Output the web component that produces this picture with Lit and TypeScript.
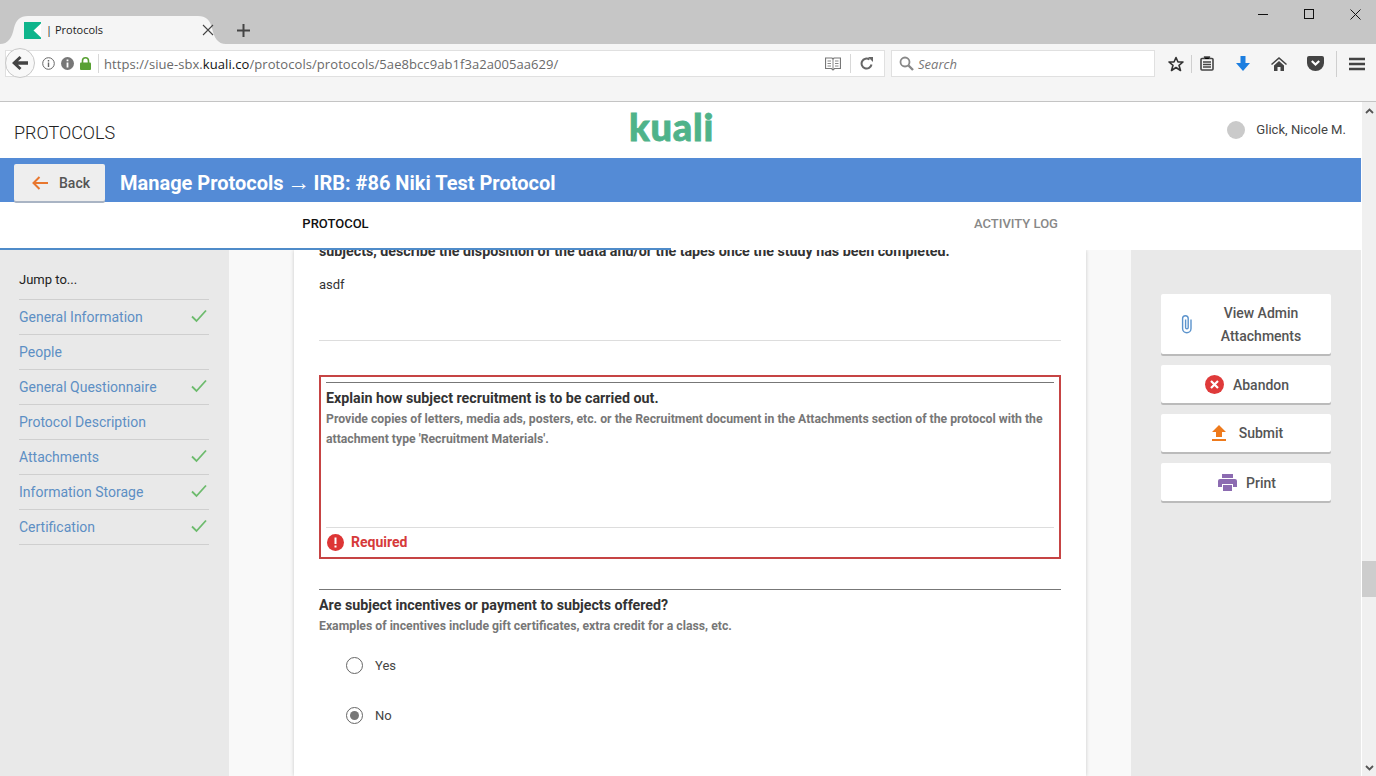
import { LitElement, html, css } from "lit";
import { customElement } from "lit/decorators.js";

const check = html`<svg class="check" width="16" height="14" viewBox="0 0 16 14"><path d="M1 7.5 5.5 12 15 1.5" fill="none" stroke="#6dbb6d" stroke-width="1.8"/></svg>`;

const NAV: [string, boolean][] = [
  ["General Information", true],
  ["People", false],
  ["General Questionnaire", true],
  ["Protocol Description", false],
  ["Attachments", true],
  ["Information Storage", true],
  ["Certification", true],
];

@customElement("browser-chrome")
class BrowserChrome extends LitElement {
  static styles = css`
    :host { display: block; font-family: "Open Sans", sans-serif; }
    .titlebar { height: 44px; background: #c6c6c6; display: flex; }
    .tab { position: relative; width: 226px; height: 28px; margin-top: 16px; display: flex; align-items: center; padding-left: 24px; box-sizing: border-box; }
    .tabshape { position: absolute; left: 0; top: 0; }
    .tab > *:not(.tabshape) { position: relative; }
    .tabtitle { margin-left: 5px; font-size: 11px; color: #222; width: 156px; padding-bottom: 2px; }
    .plus { margin: 16px 0 0 11px; height: 28px; display: flex; align-items: center; }
    .winctl { margin-left: auto; display: flex; height: 28px; align-items: center; padding-right: 15px; gap: 36px; }
    .toolbar { background: #f5f5f5; border-bottom: 1px solid #c4c4c4; position: relative; display: flex; align-items: flex-start; padding: 6px 0 0 5px; box-sizing: border-box; height: 58px; }
    .backbtn { position: absolute; left: 5px; top: 4px; width: 30px; height: 30px; border-radius: 50%; background: #f8f8f8; border: 1px solid #c8c8c8; display: flex; align-items: center; justify-content: center; box-sizing: border-box; }
    .urlbar { width: 880px; height: 27px; background: #fff; border: 1px solid #e0e0e0; box-sizing: border-box; display: flex; align-items: center; padding-left: 36px; gap: 6px; }
    .sep { width: 1px; height: 19px; background: #d8d8d8; }
    .lock { margin-right: 1px; }
    .url { font-size: 13px; color: #6a6a6a; flex: 1; letter-spacing: 0.07px; margin-left: -1px; }
    .url b { font-weight: 400; color: #111; }
    .urlend { display: flex; align-items: center; gap: 9px; padding-right: 11px; }
    .search { width: 264px; height: 27px; margin-left: 6px; background: #fff; border: 1px solid #e0e0e0; box-sizing: border-box; display: flex; align-items: center; padding-left: 7px; gap: 4px; font-style: italic; font-size: 13px; color: #777; }
    .tools { display: flex; align-items: center; height: 27px; margin-left: 13px; }
    .tools svg { flex: none; display: block; }
    .tsep { width: 1px; height: 18px; background: #cfcfcf; margin: 0 8px 0 7px; }
    .g22 { width: 22px; }
    .g21 { width: 21px; }
    .g20 { width: 20px; }
    .tsep.tall { height: 26px; margin: 0 12px; }
  `;
  render() {
    return html`
      <div class="titlebar">
        <div class="tab">
          <svg class="tabshape" width="226" height="28" viewBox="0 0 226 28"><path d="M0 28C8 28 12 22 14 12 16 4 20 0 28 0H198C206 0 210 4 212 12 214 22 218 28 226 28Z" fill="#f5f5f5"/></svg>
          <svg width="17" height="17" viewBox="0 0 17 17"><rect width="17" height="17" fill="#0fb58c"/><path d="M17 1.500 9.500 8.500 17 15.500Z" fill="#fff"/></svg>
          <span class="tabtitle">| Protocols</span>
          <svg width="12" height="12" viewBox="0 0 12 12"><path d="M1 1 11 11M11 1 1 11" stroke="#444" stroke-width="1.1"/></svg>
        </div>
        <div class="plus"><svg width="13" height="13" viewBox="0 0 13 13"><path d="M6.5 0V13M0 6.5H13" stroke="#444" stroke-width="2"/></svg></div>
        <div class="winctl">
          <svg width="10" height="10" viewBox="0 0 10 10"><path d="M0 5.5H10" stroke="#111"/></svg>
          <svg width="10" height="10" viewBox="0 0 10 10"><rect x=".5" y=".5" width="9" height="9" fill="none" stroke="#111"/></svg>
          <svg width="11" height="11" viewBox="0 0 11 11"><path d="M.5.5 10.5 10.5M10.5.5 .5 10.5" stroke="#111"/></svg>
        </div>
      </div>
      <div class="toolbar">
        <div class="backbtn"><svg width="16" height="14" viewBox="0 0 16 14"><path d="M7.5 0 0 7 7.5 14 9.5 12 6 8.7H16V5.3H6L9.5 2Z" fill="#444"/></svg></div>
        <div class="urlbar">
          <svg width="13" height="13" viewBox="0 0 13 13"><circle cx="6.5" cy="6.5" r="5.8" fill="none" stroke="#666"/><path d="M6.5 3V4.4M6.5 5.6V10" stroke="#666" stroke-width="1.4"/></svg>
          <svg width="13" height="13" viewBox="0 0 13 13"><circle cx="6.5" cy="6.5" r="6.5" fill="#777"/><path d="M6.5 2.5V4.2M6.5 5.4V10.5" stroke="#fff" stroke-width="1.8"/></svg>
          <svg class="lock" width="11" height="13" viewBox="0 0 11 13"><path d="M2.5 6V3.8a3 3 0 0 1 6 0V6" fill="none" stroke="#57a032" stroke-width="1.6"/><rect y="5.5" width="11" height="7.5" rx="1" fill="#57a032"/></svg>
          <span class="sep"></span>
          <span class="url">https://siue-sbx.<b>kuali.co</b>/protocols/protocols/5ae8bcc9ab1f3a2a005aa629/</span>
          <span class="urlend">
            <svg width="16" height="14" viewBox="0 0 16 14"><path d="M.5 1H7L8 2 9 1H15.5V11.5H9.5L8 13 6.500 11.500H.5Z" fill="none" stroke="#777" stroke-width="1.2"/><path d="M8 2V12M2.500 4H6M2.500 6.500H6M2.500 9H6M10 4H13.500M10 6.500H13.500M10 9H13.500" stroke="#888"/></svg>
            <span class="sep"></span>
            <svg width="13" height="13" viewBox="0 0 13 13"><path d="M11.500 7.500A5 5 0 1 1 9.500 2.500" fill="none" stroke="#666" stroke-width="2"/><path d="M8 0H13V5Z" fill="#666"/></svg>
          </span>
        </div>
        <div class="search">
          <svg width="15" height="15" viewBox="0 0 15 15"><circle cx="6" cy="6" r="4.500" fill="none" stroke="#888" stroke-width="1.800"/><path d="M9.500 9.500 14 14" stroke="#888" stroke-width="2.400"/></svg>
          <span>Search</span>
        </div>
        <div class="tools">
          <svg width="16" height="16" viewBox="0 0 16 16"><path d="M8 1.500 10 6H15L11 9.300 12.500 14.500 8 11.500 3.500 14.500 5 9.300 1 6H6Z" fill="none" stroke="#333" stroke-width="1.600" stroke-linejoin="round"/></svg>
          <span class="tsep"></span>
          <svg width="14" height="15" viewBox="0 0 14 15"><rect x="1" y="2.500" width="12" height="11.500" rx="1" fill="none" stroke="#444" stroke-width="1.600"/><path d="M4.500 3V1H9.500V3M3 6H11M3 8.500H11M3 11H11" stroke="#444" stroke-width="1.300"/></svg>
          <span class="g22"></span>
          <svg width="14" height="15" viewBox="0 0 14 15"><path d="M4.500 0H9.500V7H14L7 15 0 7H4.500Z" fill="#1c7ee0"/></svg>
          <span class="g21"></span>
          <svg width="16" height="14" viewBox="0 0 16 14"><path d="M8 0 16 7 15 8 8 2 1 8 0 7ZM3 8.500 8 4 13 8.500V14H9.500V10H6.500V14H3Z" fill="#444"/></svg>
          <span class="g20"></span>
          <svg width="17" height="15" viewBox="0 0 17 15"><path d="M2 0H15A2 2 0 0 1 17 2V7A8.500 8 0 0 1 0 7V2A2 2 0 0 1 2 0Z" fill="#444"/><path d="M4.800 5 8.500 8.500 12.200 5" fill="none" stroke="#fff" stroke-width="2.200"/></svg>
          <span class="tsep tall"></span>
          <svg width="16" height="14" viewBox="0 0 16 14"><path d="M0 2H16M0 7H16M0 12H16" stroke="#444" stroke-width="2.600"/></svg>
        </div>
      </div>
    `;
  }
}

@customElement("app-root")
class AppRoot extends LitElement {
  static styles = css`
    :host { display: block; width: 1376px; height: 776px; overflow: hidden; font-family: Roboto, sans-serif; background: #fff; }
    .page { display: flex; height: 674px; }
    .content { width: 1361px; display: flex; flex-direction: column; }
    .scrollbar { width: 14px; margin-left: 1px; background: #f0f0f0; display: flex; flex-direction: column; align-items: center; padding-top: 6px; box-sizing: border-box; }
    .thumb { align-self: stretch; height: 36px; margin-top: 447px; background: #cdcdcd; }
    .sdown { margin-top: auto; margin-bottom: 5px; }
    .head { height: 56px; display: flex; align-items: center; padding: 0 15px 0 14px; flex: none; }
    .app { font-size: 18px; font-weight: 300; color: #222; margin-top: 4px; width: 615px; }
    .logo { font-family: Lato, sans-serif; font-weight: 900; font-size: 38px; letter-spacing: 0.8px; -webkit-text-stroke: 0.8px #4fb38a; color: #4fb38a; line-height: 30px; margin-top: -8px; }
    .user { margin-left: auto; display: flex; align-items: center; gap: 11px; font-size: 13.1px; color: #444; margin-top: -1px; }
    .avatar { width: 18px; height: 18px; border-radius: 50%; background: #cacaca; }
    .bluebar { height: 44px; background: #548bd6; display: flex; padding-left: 14px; flex: none; }
    .backb { width: 91px; height: 37px; margin-top: 6px; background: #eeeeee; border-radius: 2px; box-shadow: 0 2px 0 #a9b4c4; display: flex; align-items: center; padding-left: 18px; box-sizing: border-box; gap: 11px; font-size: 14px; font-weight: 500; color: #555; }
    h1 { margin: 0 0 0 15px; font-size: 20px; font-weight: 700; color: #fff; line-height: 50px; white-space: nowrap; }
    h1 .arrow { font-family: "Liberation Sans", sans-serif; font-weight: 400; font-size: 23px; margin: 0 -1.5px; line-height: 20px; }
    .tabs { height: 48px; display: grid; grid-template-columns: 671px 1fr; flex: none; }
    .tabi { display: flex; align-items: center; justify-content: center; font-size: 13px; font-weight: 500; padding-bottom: 6px; color: #888; }
    .tabi.on { color: #111; border-bottom: 2px solid #4f8bc9; padding-bottom: 4px; }
    .body { flex: 1; display: flex; overflow: hidden; min-height: 0; }
    .side { width: 229px; background: #e9e9e9; padding: 19px 20px 0 19px; box-sizing: border-box; font-size: 14px; }
    .jump { height: 30px; line-height: 21px; font-size: 13px; color: #222; border-bottom: 1px solid #cfcfcf; }
    .nav { height: 34px; border-bottom: 1px solid #cfcfcf; display: flex; align-items: center; justify-content: space-between; color: #5d8fc4; padding-right: 2px; }
    .check { margin-top: -2px; }
    .main { flex: 1; background: #f9f9f9; padding-left: 65px; min-width: 0; }
    .card { width: 792px; height: 100%; background: #fff; box-shadow: 0 0 4px rgba(0,0,0,.2); box-sizing: border-box; padding: 0 25px; color: #333; overflow: hidden; }
    .clipped { margin: -9px 0 0; font-size: 14.25px; font-weight: 700; line-height: 20px; color: #333; white-space: nowrap; }
    .answer { margin-top: 14px; font-size: 13px; line-height: 20px; }
    .hr { height: 1px; background: #ddd; margin-top: 45px; }
    .err { margin-top: 34px; height: 184px; border: 2px solid #c64444; box-sizing: border-box; padding: 5px 5px 0; display: flex; flex-direction: column; }
    .rule { height: 1px; background: #777; flex: none; }
    .q { font-size: 14.25px; font-weight: 700; line-height: 20px; color: #333; margin-top: 5px; }
    .hint { font-size: 12.24px; font-weight: 700; color: #777; line-height: 20px; margin-top: 1px; }
    .foot { margin-top: auto; border-top: 1px solid #ddd; height: 30px; display: flex; align-items: center; gap: 7px; padding: 0 0 1px 1px; box-sizing: border-box; color: #d63a3a; font-size: 14px; font-weight: 700; }
    .block { margin-top: 30px; }
    .opt { display: flex; align-items: center; gap: 12px; height: 50px; margin-left: 27px; font-size: 13px; color: #444; }
    .opts { margin-top: 4px; }
    .radio { width: 17px; height: 17px; border: 1.5px solid #666; border-radius: 50%; box-sizing: border-box; display: flex; align-items: center; justify-content: center; }
    .radio.on::after { content: ""; width: 9px; height: 9px; background: #777; border-radius: 50%; }
    .rail { width: 230px; background: #e9e9e9; padding: 44px 30px 0; box-sizing: border-box; display: flex; flex-direction: column; gap: 11px; }
    .btn { background: #fff; height: 38px; border-radius: 2px; box-shadow: 0 2px 0 #bbb; display: flex; align-items: center; justify-content: center; gap: 9px; padding-left: 2px; box-sizing: border-box; font-size: 14px; font-weight: 500; color: #555; flex: none; }
    .btn span { margin-top: 2px; }
    .btn.submit { gap: 13px; padding-left: 3px; }
    .btn.submit span { margin-top: 0; }
    .btn.tall { height: 60px; justify-content: flex-start; padding-left: 19px; }
    .btn.tall span { flex: 1; text-align: center; line-height: 23px; padding-right: 12px; }
  `;
  render() {
    return html`
      <browser-chrome></browser-chrome>
      <div class="page">
        <div class="content">
          <div class="head">
            <div class="app">PROTOCOLS</div>
            <div class="logo">kuali</div>
            <div class="user"><span class="avatar"></span><span>Glick, Nicole M.</span></div>
          </div>
          <div class="bluebar">
            <div class="backb">
              <svg width="16" height="14" viewBox="0 0 16 14"><path d="M16 7H1.500M7.500 1 1.500 7 7.500 13" fill="none" stroke="#e8772e" stroke-width="2"/></svg>
              Back
            </div>
            <h1>Manage Protocols <span class="arrow">→</span> IRB: #86 Niki Test Protocol</h1>
          </div>
          <div class="tabs">
            <div class="tabi on">PROTOCOL</div>
            <div class="tabi">ACTIVITY LOG</div>
          </div>
          <div class="body">
            <div class="side">
              <div class="jump">Jump to...</div>
              ${NAV.map(([t, c]) => html`<div class="nav"><span>${t}</span>${c ? check : ""}</div>`)}
            </div>
            <div class="main">
              <div class="card">
                <p class="clipped">subjects, describe the disposition of the data and/or the tapes once the study has been completed.</p>
                <div class="answer">asdf</div>
                <div class="hr"></div>
                <div class="err">
                  <div class="rule"></div>
                  <div class="q">Explain how subject recruitment is to be carried out.</div>
                  <div class="hint">Provide copies of letters, media ads, posters, etc. or the Recruitment document in the Attachments section of the protocol with the attachment type 'Recruitment Materials'.</div>
                  <div class="foot">
                    <svg width="17" height="17" viewBox="0 0 17 17"><circle cx="8.500" cy="8.500" r="8.500" fill="#dd3535"/><path d="M8.500 3.500V10M8.500 11.500V13.500" stroke="#fff" stroke-width="2"/></svg>
                    Required
                  </div>
                </div>
                <div class="block">
                  <div class="rule"></div>
                  <div class="q">Are subject incentives or payment to subjects offered?</div>
                  <div class="hint">Examples of incentives include gift certificates, extra credit for a class, etc.</div>
                  <div class="opts">
                    <div class="opt"><span class="radio"></span>Yes</div>
                    <div class="opt"><span class="radio on"></span>No</div>
                  </div>
                </div>
              </div>
            </div>
            <div class="rail">
              <div class="btn tall">
                <svg width="14" height="20" viewBox="0 0 14 20"><path d="M11 5.500V14.500A4.200 4.200 0 0 1 2.600 14.500V4.500A2.800 2.800 0 0 1 8.200 4.500V13.500A1.300 1.300 0 0 1 5.600 13.500V5.500" fill="none" stroke="#5b93cc" stroke-width="1.400"/></svg>
                <span>View Admin Attachments</span>
              </div>
              <div class="btn">
                <svg width="19" height="19" viewBox="0 0 19 19"><circle cx="9.500" cy="9.500" r="9.500" fill="#df3a3a"/><path d="M6 6 13 13M13 6 6 13" stroke="#fff" stroke-width="2.200"/></svg>
                <span>Abandon</span>
              </div>
              <div class="btn submit">
                <svg width="14" height="16" viewBox="0 0 14 16"><path d="M7 0 14 7H10V12H4V7H0ZM0 14H14V16H0Z" fill="#ee7a1c"/></svg>
                <span>Submit</span>
              </div>
              <div class="btn">
                <svg width="19" height="17" viewBox="0 0 19 17"><path d="M4 0H15V4H4ZM2 5H17A2 2 0 0 1 19 7V13H15V10H4V13H0V7A2 2 0 0 1 2 5ZM5 11H14V17H5Z" fill="#8c6bb1"/></svg>
                <span>Print</span>
              </div>
            </div>
          </div>
        </div>
        <div class="scrollbar">
          <svg width="9" height="6" viewBox="0 0 9 6"><path d="M1 5 4.500 1.500 8 5" fill="none" stroke="#555" stroke-width="1.800"/></svg>
          <div class="thumb"></div>
          <svg class="sdown" width="9" height="6" viewBox="0 0 9 6"><path d="M1 1 4.500 4.500 8 1" fill="none" stroke="#555" stroke-width="1.800"/></svg>
        </div>
      </div>
    `;
  }
}
